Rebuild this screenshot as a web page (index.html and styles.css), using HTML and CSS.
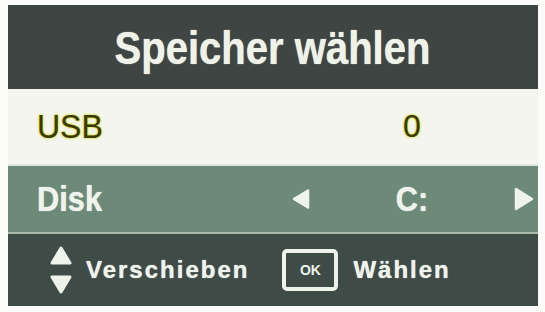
FILE: index.html
```html
<!DOCTYPE html>
<html lang="de">
<head>
<meta charset="utf-8">
<title>Speicher wählen</title>
<link rel="stylesheet" href="styles.css">
</head>
<body>
<div class="panel">
  <div class="header"><span class="title">Speicher wählen</span></div>
  <div class="row row-usb">
    <span class="label usb">USB</span>
    <span class="arrow"></span>
    <span class="value usb">0</span>
    <span class="arrow"></span>
  </div>
  <div class="row row-disk">
    <span class="label disk">Disk</span>
    <span class="arrow">
      <svg width="19" height="22" viewBox="0 0 19 22"><path d="M17 2 L2 11 L17 20 Z" fill="#eef3ec" stroke="#eef3ec" stroke-width="2.5" stroke-linejoin="round"/></svg>
    </span>
    <span class="value disk">C:</span>
    <span class="arrow">
      <svg width="20" height="24" viewBox="0 0 20 24"><path d="M2 2 L18 12 L2 22 Z" fill="#eef3ec" stroke="#eef3ec" stroke-width="2.5" stroke-linejoin="round"/></svg>
    </span>
  </div>
  <div class="footer">
    <svg class="updown" width="22" height="48" viewBox="0 0 22 48"><path d="M11 2 L20 17 L2 17 Z" fill="#eef3ec" stroke="#eef3ec" stroke-width="3" stroke-linejoin="round"/><path d="M2 31 L20 31 L11 46 Z" fill="#eef3ec" stroke="#eef3ec" stroke-width="3" stroke-linejoin="round"/></svg>
    <span class="hint">Verschieben</span>
    <span class="okbox">OK</span>
    <span class="hint">Wählen</span>
  </div>
</div>
</body>
</html>
```
FILE: styles.css
```css
html, body {
  margin: 0;
  padding: 0;
  background: #fbfcf9;
}
body {
  font-family: "Liberation Sans", Arial, sans-serif;
}
.panel {
  margin: 5px 0 0 8px;
  width: 530px;
  height: 301px;
  display: flex;
  flex-direction: column;
}
.header {
  height: 84px;
  background: #3f4542;
  display: flex;
  align-items: center;
  justify-content: center;
}
.title {
  display: inline-block;
  color: #eef2e9;
  font-weight: bold;
  font-size: 46px;
  transform: scaleX(0.87);
  margin-top: 2px;
  text-shadow: 0 0 1px #eef2e9;
}
.row {
  display: grid;
  grid-template-columns: 255px 18px 204px 20px;
  padding-left: 29px;
  align-items: center;
}
.row-usb {
  height: 75px;
  background: #f3f5ee;
  border-bottom: 2px solid #dfe6dc;
}
.row-disk {
  height: 66px;
  background: #6d8a78;
  border-bottom: 2px solid #a9bcae;
}
.arrow {
  display: flex;
  align-items: center;
}
.value {
  text-align: center;
}
.usb {
  color: #3a3a08;
  font-size: 32px;
  text-shadow: 0 0 3px #e6ee30, 0 0 1px #e6ee30, 0 0 1px #3a3a08;
}
.label.usb {
  display: inline-block;
  transform: scaleY(1.05);
}
.disk {
  display: inline-block;
  color: #eef3ec;
  font-weight: bold;
  font-size: 35px;
  transform: scaleX(0.88);
  transform-origin: left center;
  text-shadow: 0 0 1px #eef3ec;
}
.value.disk {
  transform-origin: center;
}
.footer {
  flex: 1;
  background: #3e4b46;
  display: flex;
  align-items: center;
  padding-left: 42px;
}
.updown {
  margin-right: 14px;
}
.hint {
  color: #eef3ec;
  font-weight: bold;
  font-size: 24px;
  letter-spacing: 2px;
  text-shadow: 0 0 1px #eef3ec;
}
.okbox {
  margin: 0 15px 0 33px;
  width: 48px;
  height: 34px;
  border: 4px solid #eef3ec;
  border-radius: 5px;
  color: #eef3ec;
  font-weight: bold;
  font-size: 14px;
  display: flex;
  align-items: center;
  justify-content: center;
}
```
